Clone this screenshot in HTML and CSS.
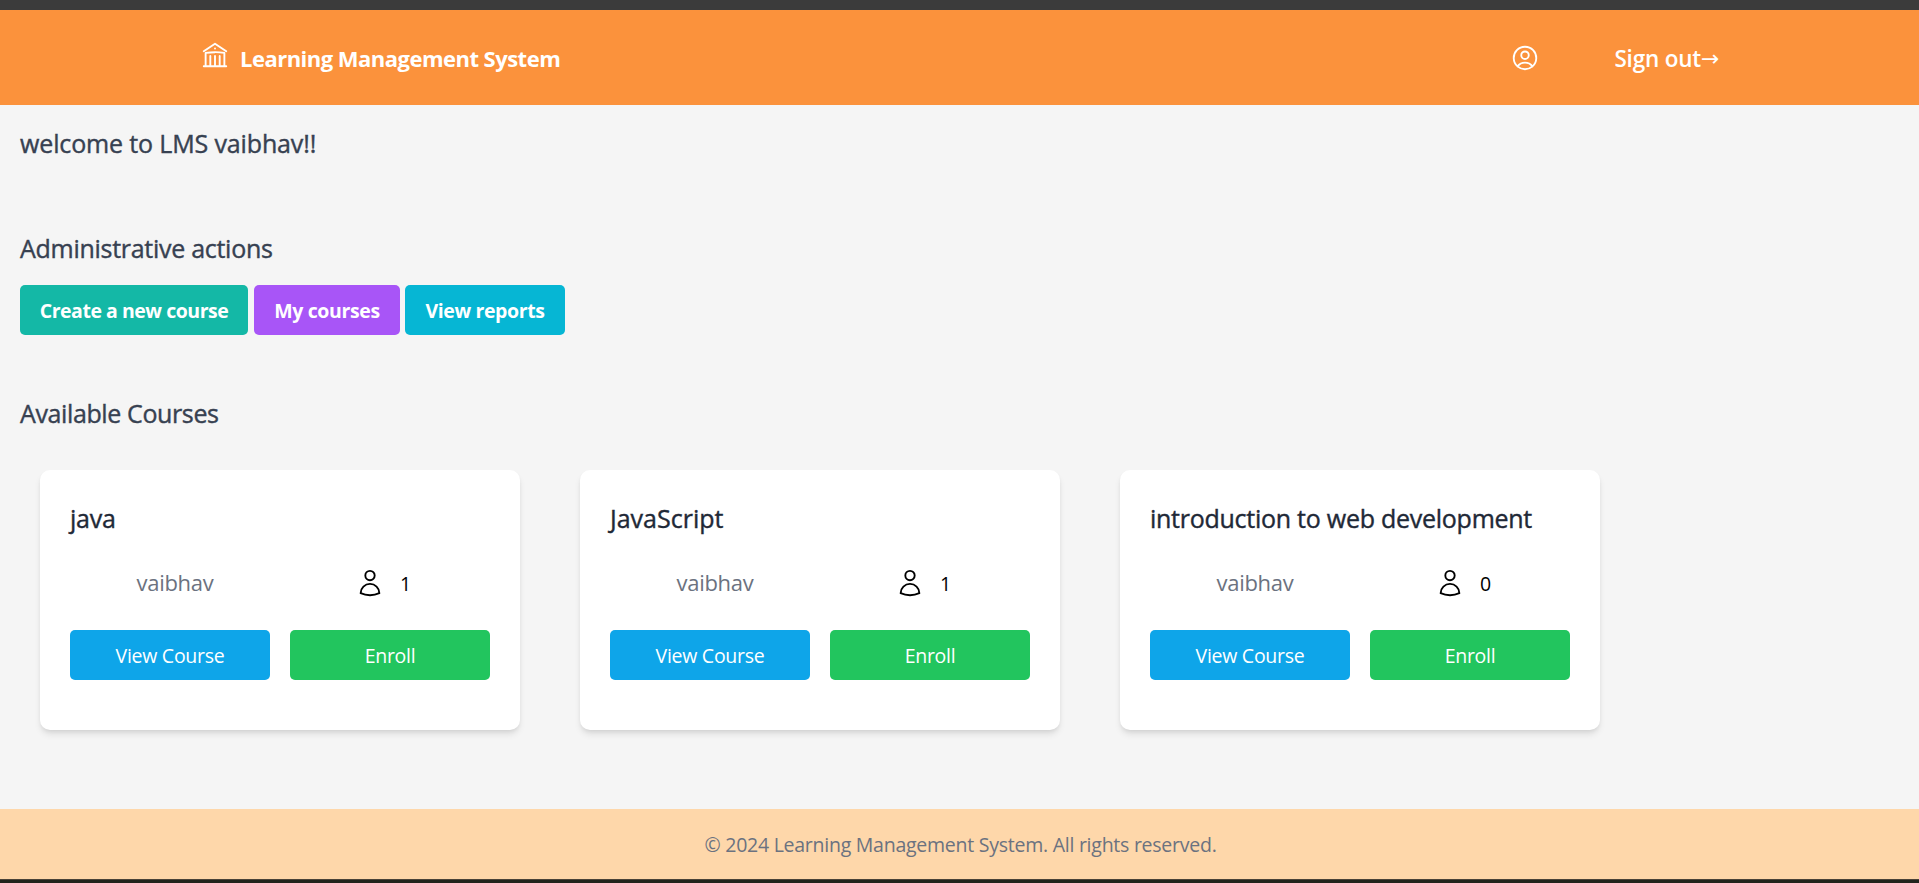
FILE: index.html
```html
<!DOCTYPE html>
<html lang="en">
<head>
<meta charset="utf-8">
<title>Learning Management System</title>
<link rel="stylesheet" href="styles.css">
</head>
<body>
<div class="window-top"></div>
<header class="header">
  <div class="brand">
    <svg class="icon brand-icon" viewBox="0 0 24 24"><path d="M12 21v-8.25M15.75 21v-8.25M8.25 21v-8.25M3 9l9-6 9 6m-1.5 12V10.332A48.36 48.36 0 0 0 12 9.75c-2.551 0-5.056.2-7.5.582V21M3 21h18M12 6.75h.008v.008H12V6.75Z"/></svg>
    <span class="brand-name">Learning Management System</span>
  </div>
  <nav class="nav">
    <svg class="icon" viewBox="0 0 24 24"><path d="M17.982 18.725A7.488 7.488 0 0 0 12 15.75a7.488 7.488 0 0 0-5.982 2.975m11.963 0a9 9 0 1 0-11.963 0m11.963 0A8.966 8.966 0 0 1 12 21a8.966 8.966 0 0 1-5.982-2.275M15 9.75a3 3 0 1 1-6 0 3 3 0 0 1 6 0Z"/></svg>
    <a class="signout">Sign out<span class="arrow">→</span></a>
  </nav>
</header>
<main class="main">
  <h1 class="heading welcome">welcome to LMS vaibhav!!</h1>
  <section class="admin">
    <h2 class="heading admin-title">Administrative actions</h2>
    <div class="actions">
      <button class="action create">Create a new course</button>
      <button class="action mine">My courses</button>
      <button class="action reports">View reports</button>
    </div>
  </section>
  <section class="available">
    <h2 class="heading available-title">Available Courses</h2>
    <div class="cards">
      <article class="card">
        <h3 class="card-title">java</h3>
        <div class="meta">
          <span class="author">vaibhav</span>
          <span class="students"><svg class="icon" viewBox="0 0 24 24"><path d="M15.75 6a3.75 3.75 0 1 1-7.5 0 3.75 3.75 0 0 1 7.5 0ZM4.501 20.118a7.5 7.5 0 0 1 14.998 0A17.933 17.933 0 0 1 12 21.75c-2.676 0-5.216-.584-7.499-1.632Z"/></svg><span class="count">1</span></span>
        </div>
        <div class="card-actions"><button class="btn view">View Course</button><button class="btn enroll">Enroll</button></div>
      </article>
      <article class="card">
        <h3 class="card-title script">JavaScript</h3>
        <div class="meta">
          <span class="author">vaibhav</span>
          <span class="students"><svg class="icon" viewBox="0 0 24 24"><path d="M15.75 6a3.75 3.75 0 1 1-7.5 0 3.75 3.75 0 0 1 7.5 0ZM4.501 20.118a7.5 7.5 0 0 1 14.998 0A17.933 17.933 0 0 1 12 21.75c-2.676 0-5.216-.584-7.499-1.632Z"/></svg><span class="count">1</span></span>
        </div>
        <div class="card-actions"><button class="btn view">View Course</button><button class="btn enroll">Enroll</button></div>
      </article>
      <article class="card">
        <h3 class="card-title">introduction to web development</h3>
        <div class="meta">
          <span class="author">vaibhav</span>
          <span class="students"><svg class="icon" viewBox="0 0 24 24"><path d="M15.75 6a3.75 3.75 0 1 1-7.5 0 3.75 3.75 0 0 1 7.5 0ZM4.501 20.118a7.5 7.5 0 0 1 14.998 0A17.933 17.933 0 0 1 12 21.75c-2.676 0-5.216-.584-7.499-1.632Z"/></svg><span class="count">0</span></span>
        </div>
        <div class="card-actions"><button class="btn view">View Course</button><button class="btn enroll">Enroll</button></div>
      </article>
    </div>
  </section>
</main>
<footer class="footer">© 2024 Learning Management System. All rights reserved.</footer>
<div class="window-bottom"></div>
</body>
</html>
```
FILE: styles.css
```css
*, *::before, *::after { box-sizing: border-box; }
body {
  margin: 0;
  height: 883px;
  display: flex;
  flex-direction: column;
  overflow: hidden;
  background: #f5f5f5;
  color: #000;
  font: 400 19.5px/30px "Open Sans", "Noto Sans", sans-serif;
}
h1, h2, h3 { margin: 0; }
button {
  border: 0;
  padding: 2px 0 0;
  color: #fff;
  font: inherit;
  letter-spacing: inherit;
}
.window-top { height: 10px; background: #3b3b3b; }
.window-bottom { height: 4px; background: #21231c; border-top: 1px solid #4a4238; }
.icon {
  display: block;
  width: 30px;
  height: 30px;
  flex: none;
  fill: none;
  stroke: currentColor;
  stroke-width: 1.5;
  stroke-linecap: round;
  stroke-linejoin: round;
}
.header {
  height: 95px;
  padding: 0 200px;
  display: flex;
  align-items: center;
  justify-content: space-between;
  background: #fb923c;
  color: #fff;
}
.brand { display: flex; align-items: center; gap: 10px; }
.brand-icon { margin-bottom: 5px; }
.brand-name { font-size: 22px; font-weight: 700; letter-spacing: -0.52px; }
.nav { display: flex; align-items: center; gap: 74px; }
.signout { display: flex; padding-top: 2px; font-size: 22.5px; font-weight: 600; letter-spacing: -0.2px; }
.arrow { width: 18px; font-family: "DejaVu Sans", sans-serif; font-size: 22px; font-weight: 400; letter-spacing: 0; }
.main { height: 704px; padding: 21px 20px 0; }
.heading { font-size: 25px; line-height: 35px; font-weight: 500; color: #374151; -webkit-text-stroke: 0.4px currentColor; }
.welcome { letter-spacing: -0.14px; }
.admin { padding-top: 70px; }
.admin-title { letter-spacing: -0.28px; }
.available-title { letter-spacing: -0.38px; }
.actions { display: flex; padding-top: 19px; }
.action { height: 50px; border-radius: 5px; font-weight: 700; letter-spacing: -0.38px; }
.create { width: 228px; margin-right: 6px; background: #14b8a6; letter-spacing: -0.47px; }
.mine { width: 146px; margin-right: 5px; background: #a855f7; }
.reports { width: 160px; background: #06b6d4; }
.available { padding-top: 61px; }
.cards { display: flex; gap: 60px; padding: 39px 20px 0; }
.card {
  width: 480px;
  height: 260px;
  padding: 31px 30px 0;
  border-radius: 10px;
  background: #fff;
  box-shadow: 0 5px 7.5px -1px rgba(0, 0, 0, .1), 0 2.5px 5px -2.5px rgba(0, 0, 0, .1);
}
.card-title { font-size: 25px; line-height: 35px; font-weight: 500; letter-spacing: -0.26px; color: #1f2937; -webkit-text-stroke: 0.4px currentColor; }
.script { letter-spacing: 0; }
.meta { height: 62px; padding-top: 32px; display: flex; }
.author { flex: 1; padding-left: 1px; text-align: center; font-size: 22px; line-height: 29px; letter-spacing: -0.27px; color: #6b7280; }
.students { flex: 1; height: 30px; display: flex; align-items: center; justify-content: center; gap: 15px; padding-right: 3px; }
.count { padding-top: 2px; }
.card-actions { display: flex; gap: 20px; padding-top: 32px; }
.btn { flex: 1; height: 50px; border-radius: 5px; letter-spacing: -0.27px; }
.view { background: #0ea5e9; }
.enroll { background: #22c55e; }
.footer {
  height: 70px;
  padding: 1px 0 0 2px;
  background: #fed7aa;
  color: #6b7280;
  line-height: 70px;
  letter-spacing: -0.25px;
  text-align: center;
}
```
